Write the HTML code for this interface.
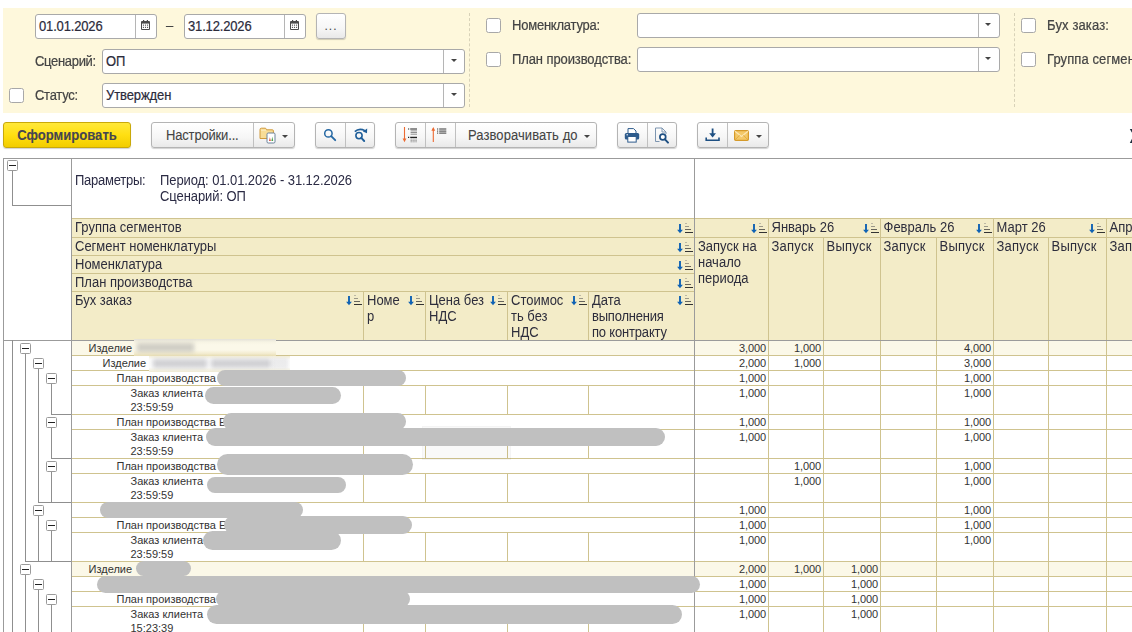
<!DOCTYPE html>
<html lang="ru"><head><meta charset="utf-8"><title>Отчет</title>
<style>
html,body{margin:0;padding:0;background:#fff;}
body{width:1132px;height:632px;overflow:hidden;position:relative;font-family:"Liberation Sans",Arial,sans-serif;font-size:13px;letter-spacing:-0.2px;color:#333;}
.abs{position:absolute;}
.panel{position:absolute;left:3px;top:8px;width:1129px;height:105px;background:#fef8dc;}
.inp{position:absolute;box-sizing:border-box;background:#fff;border:1px solid #a9a9a9;border-radius:3px;height:25px;line-height:25px;padding-left:3px;color:#2b2b3b;white-space:nowrap;overflow:hidden;}
.inp .sep{position:absolute;top:0;bottom:0;width:1px;background:#b5b5b5;}
.lbl{position:absolute;white-space:nowrap;color:#444;line-height:16px;transform:scaleY(1.1);transform-origin:0 12.5px;-webkit-text-stroke:0.2px;}
.tx{display:inline-block;transform:translateY(-0.7px) scaleY(1.1);transform-origin:0 70%;-webkit-text-stroke:0.2px;}
.btn .tx{transform:translateY(0.6px) scaleY(1.1);-webkit-text-stroke:0.08px;}
.cb{position:absolute;box-sizing:border-box;width:15px;height:15px;border:1px solid #a8a8a8;border-radius:2.5px;background:#fff;}
.arr{position:absolute;width:0;height:0;border-left:3px solid transparent;border-right:3px solid transparent;border-top:3px solid #444;}
.btn{position:absolute;box-sizing:border-box;top:122px;height:26px;border:1px solid #b4b4b4;border-radius:3px;background:linear-gradient(#ffffff,#f6f6f6 60%,#e9e9e9);box-shadow:0 1px 1px rgba(0,0,0,.18);white-space:nowrap;line-height:24px;color:#444;}
.btn .sep{position:absolute;top:0;bottom:0;width:1px;background:#c0c0c0;}
.btn svg{position:absolute;}
.dash{position:absolute;width:0;border-left:1px dashed #d8d2b8;}
.hl{position:absolute;height:1px;}
.vl{position:absolute;width:1px;}
.g{background:#9b9b9b;}
.t{background:#cfc38f;}
.hd{position:absolute;letter-spacing:0;font-size:13px;line-height:14.4px;transform:scaleY(1.1);transform-origin:0 0;color:#2d2d3c;white-space:nowrap;}
.d{position:absolute;letter-spacing:0;font-size:11px;line-height:14px;color:#333;white-space:nowrap;}
.n{position:absolute;letter-spacing:-0.1px;font-size:11px;line-height:14px;color:#333;text-align:right;width:50px;}
.box{position:absolute;box-sizing:border-box;width:11px;height:11px;border:1px solid #9a9a9a;border-radius:1.5px;background:#fff;}
.box:after{content:"";position:absolute;left:1px;top:4px;width:7px;height:1px;background:#222;}
.blob{position:absolute;background:#c0c0c0;}
.si{position:absolute;width:16px;height:11px;}
</style></head><body>

<div class="panel"></div>
<div class="inp" style="left:35px;top:14px;width:122px;"><span class="tx" style="letter-spacing:-0.16px">01.01.2026</span><span class="sep" style="left:99px"></span></div>
<div class="lbl" style="left:166px;top:18px;">–</div>
<div class="inp" style="left:184px;top:14px;width:122px;"><span class="tx" style="letter-spacing:-0.16px">31.12.2026</span><span class="sep" style="left:99px"></span></div>
<svg class="abs" style="left:141px;top:20px" width="9" height="10" viewBox="0 0 9 10"><rect x="0" y="1" width="9" height="9" rx="1" fill="#4a4a4a"/><rect x="1" y="3.6" width="7" height="5.4" fill="#fff"/><rect x="2" y="0" width="1.2" height="1.6" fill="#4a4a4a"/><rect x="5.8" y="0" width="1.2" height="1.6" fill="#4a4a4a"/><g fill="#4a4a4a"><rect x="1.9" y="4.6" width="1.1" height="1.1"/><rect x="3.95" y="4.6" width="1.1" height="1.1"/><rect x="6" y="4.6" width="1.1" height="1.1"/><rect x="1.9" y="6.8" width="1.1" height="1.1"/><rect x="3.95" y="6.8" width="1.1" height="1.1"/><rect x="6" y="6.8" width="1.1" height="1.1"/></g></svg>
<svg class="abs" style="left:290px;top:20px" width="9" height="10" viewBox="0 0 9 10"><rect x="0" y="1" width="9" height="9" rx="1" fill="#4a4a4a"/><rect x="1" y="3.6" width="7" height="5.4" fill="#fff"/><rect x="2" y="0" width="1.2" height="1.6" fill="#4a4a4a"/><rect x="5.8" y="0" width="1.2" height="1.6" fill="#4a4a4a"/><g fill="#4a4a4a"><rect x="1.9" y="4.6" width="1.1" height="1.1"/><rect x="3.95" y="4.6" width="1.1" height="1.1"/><rect x="6" y="4.6" width="1.1" height="1.1"/><rect x="1.9" y="6.8" width="1.1" height="1.1"/><rect x="3.95" y="6.8" width="1.1" height="1.1"/><rect x="6" y="6.8" width="1.1" height="1.1"/></g></svg>
<div class="btn" style="left:316px;top:13px;width:30px;height:26px;text-align:center;line-height:25px;color:#444;font-size:12px;letter-spacing:1px;">...</div>
<div class="lbl" style="left:35px;top:54px;letter-spacing:-0.32px">Сценарий:</div>
<div class="inp" style="left:102px;top:49px;width:363px;"><span class="tx" style="letter-spacing:0">ОП</span><span class="sep" style="left:340px"></span></div>
<div class="arr" style="left:450.5px;top:59px"></div>
<div class="cb" style="left:9px;top:88px"></div>
<div class="lbl" style="left:35px;top:88px;letter-spacing:-0.27px">Статус:</div>
<div class="inp" style="left:102px;top:83px;width:363px;"><span class="tx" style="letter-spacing:-0.1px">Утвержден</span><span class="sep" style="left:340px"></span></div>
<div class="arr" style="left:450.5px;top:93px"></div>
<div class="dash" style="left:469px;top:13px;height:94px"></div>
<div class="cb" style="left:486px;top:18px"></div>
<div class="lbl" style="left:512px;top:18px;letter-spacing:-0.22px">Номенклатура:</div>
<div class="inp" style="left:637px;top:13px;width:363px;"><span class="sep" style="left:340px"></span></div>
<div class="arr" style="left:984.5px;top:23px"></div>
<div class="cb" style="left:486px;top:52px"></div>
<div class="lbl" style="left:512px;top:52px;letter-spacing:-0.1px">План производства:</div>
<div class="inp" style="left:637px;top:47px;width:363px;"><span class="sep" style="left:340px"></span></div>
<div class="arr" style="left:984.5px;top:57px"></div>
<div class="dash" style="left:1014px;top:13px;height:94px"></div>
<div class="cb" style="left:1021px;top:18px"></div>
<div class="lbl" style="left:1047px;top:18px;letter-spacing:0.13px">Бух заказ:</div>
<div class="cb" style="left:1021px;top:52px"></div>
<div class="lbl" style="left:1047px;top:52px;letter-spacing:0.1px">Группа сегментов номенклатуры:</div>
<div class="btn" style="left:3px;width:128px;border-color:#c9a90a;background:linear-gradient(#ffe83a,#ffdf12 50%,#f2cd00);text-align:center;font-weight:bold;font-size:13.1px;letter-spacing:0;color:#454550;"><span class="tx">Сформировать</span></div>
<div class="btn" style="left:151px;width:144px;padding-left:14px;"><span class="tx" style="letter-spacing:-0.17px">Настройки...</span><span class="sep" style="left:101px"></span><svg style="left:106.5px;top:3.5px" width="18" height="17" viewBox="0 0 18 17"><path d="M1 2.6 Q1 1.2 2.4 1.2 H6.6 L7.6 2.8 H13.4 Q14.4 2.8 14.4 3.8 V11.5 H1 Z" fill="#f8dc96" stroke="#d09a3c" stroke-width="1"/><path d="M2 3.2 H7" stroke="#fbeec8" stroke-width="1"/><rect x="8" y="6" width="8" height="10" rx="1.2" fill="#fff" stroke="#6a829c" stroke-width="1"/><path d="M10 14 L10.9 10.2 L11.8 14 Z" fill="#e0483c"/><path d="M12.4 14 L13.3 9.6 L14.2 14 Z" fill="#4aa24a"/></svg></div>
<div class="arr" style="left:282px;top:134.5px"></div>
<div class="btn" style="left:315px;width:60px;"><span class="sep" style="left:29px"></span><svg style="left:7px;top:5px" width="14" height="14" viewBox="0 0 14 14"><circle cx="5.4" cy="5.4" r="3.7" fill="none" stroke="#2467a3" stroke-width="1.5"/><path d="M8.2 8.2 L12.2 12.2" stroke="#2467a3" stroke-width="1.9" stroke-linecap="round"/></svg><svg style="left:36.5px;top:4px" width="16" height="16" viewBox="0 0 16 16"><circle cx="6" cy="8.6" r="3.1" fill="none" stroke="#1f5f9a" stroke-width="1.6"/><path d="M8.3 10.9 L11.2 14" stroke="#1f5f9a" stroke-width="1.9" stroke-linecap="round"/><path d="M1.8 4.6 Q6 0.6 12 3.6" fill="none" stroke="#1f5f9a" stroke-width="1.6"/><path d="M14.2 1.6 L14 6.2 L9.8 4.4 Z" fill="#1f5f9a"/></svg></div>
<div class="btn" style="left:395px;width:202px;padding-left:72px;"><span class="sep" style="left:29px"></span><span class="sep" style="left:59px"></span><span class="tx" style="letter-spacing:0.08px">Разворачивать до</span><svg style="left:6px;top:4px" width="18" height="17" viewBox="0 0 18 17"><path d="M2.5 0 V13.5" stroke="#ec6a32" stroke-width="1.1"/><path d="M0.6 11.6 L2.5 15.2 L4.4 11.6 Z" fill="#ec6a32"/><g stroke="#222" stroke-width="1.2"><path d="M6 2 H7.2 M8.2 2 H15"/><path d="M6 10.3 H7.2 M8.2 10.3 H15"/></g><g stroke="#777" stroke-width="0.8"><path d="M8.6 3.9 H15"/><path d="M8.6 5.5 H15"/><path d="M8.6 7.2 H15"/><path d="M8.6 11.9 H15" stroke-dasharray="1.2 0.7"/><path d="M8.6 13.4 H15" stroke-dasharray="1.2 0.7"/><path d="M8.6 14.8 H15" stroke-dasharray="1.2 0.7"/></g></svg><svg style="left:34px;top:4px" width="18" height="17" viewBox="0 0 18 17"><path d="M3.3 1.5 V15" stroke="#ec6a32" stroke-width="1.1"/><path d="M1.4 3.8 L3.3 0 L5.2 3.8 Z" fill="#ec6a32"/><g stroke="#222" stroke-width="0.9"><path d="M7 2 H8.2 M9.2 2 H16.3"/><path d="M7 4.1 H8.2 M9.2 4.1 H16.3"/><path d="M7 6.1 H8.2 M9.2 6.1 H16.3"/></g></svg></div>
<div class="arr" style="left:584px;top:134.5px"></div>
<div class="btn" style="left:617px;width:60px;"><span class="sep" style="left:29px"></span><svg style="left:6.2px;top:5px" width="16" height="15" viewBox="0 0 16 15"><path d="M4 5 V0.6 H9.5 L12 3 V5" fill="#fff" stroke="#2d5b8c" stroke-width="1"/><rect x="0.8" y="5" width="14.4" height="6.5" rx="1.5" fill="#2d5b8c"/><rect x="3.8" y="8.5" width="8.4" height="5.6" fill="#fff" stroke="#2d5b8c" stroke-width="1"/><rect x="2.5" y="6.3" width="1.5" height="1" fill="#fff"/></svg><svg style="left:36px;top:4px" width="16" height="17" viewBox="0 0 16 17"><path d="M1.5 1 H8 L12 5 V7 M1.5 1 V14.5 H5.5" fill="none" stroke="#7d95b0" stroke-width="1"/><path d="M8 1 V5 H12" fill="none" stroke="#7d95b0" stroke-width="1"/><circle cx="8.8" cy="10" r="2.9" fill="#fff" stroke="#1d4f82" stroke-width="1.7"/><path d="M11 12.4 L14 15.6" stroke="#1d4f82" stroke-width="2" stroke-linecap="round"/></svg></div>
<div class="btn" style="left:697px;width:72px;"><span class="sep" style="left:29px"></span><svg style="left:7px;top:5px" width="16" height="14" viewBox="0 0 16 14"><path d="M7.6 0.5 V8" stroke="#1d4f82" stroke-width="1.8"/><path d="M4.2 5.2 L7.6 9.4 L11 5.2 Z" fill="#1d4f82"/><path d="M1.2 9.5 V12.3 H14 V9.5" fill="none" stroke="#1d4f82" stroke-width="1.6"/></svg><svg style="left:36px;top:7px" width="15" height="11" viewBox="0 0 15 11"><rect x="0.6" y="0.6" width="13.8" height="9.8" rx="1.2" fill="#f4c868" stroke="#d59a2a" stroke-width="1.2"/><path d="M1 1.2 L7.5 6.4 L14 1.2" fill="none" stroke="#fbe7b5" stroke-width="1.2"/><path d="M1 10 L5.6 5.2 M14 10 L9.4 5.2" stroke="#dca63a" stroke-width="0.8"/></svg></div>
<div class="arr" style="left:756px;top:134.5px"></div>
<svg class="abs" style="left:1129px;top:129px" width="3" height="14" viewBox="0 0 3 14"><path d="M0.8 0 H3 V3.8 Z M0.8 14 H3 V9.8 Z" fill="#1f2d3d"/></svg>
<div class="abs" style="left:72px;top:218px;width:1060px;height:122px;background:#f3ecc8"></div>
<div class="abs" style="left:72px;top:340px;width:1060px;height:15px;background:#fbf8e8"></div>
<div class="abs" style="left:72px;top:561px;width:1060px;height:15px;background:#fbf8e8"></div>
<div class="hl t" style="left:72px;top:218px;width:622px"></div>
<div class="hl t" style="left:72px;top:237px;width:622px"></div>
<div class="hl t" style="left:72px;top:255px;width:622px"></div>
<div class="hl t" style="left:72px;top:273px;width:622px"></div>
<div class="hl t" style="left:72px;top:291px;width:622px"></div>
<div class="hl t" style="left:694px;top:218px;width:438px"></div>
<div class="hl t" style="left:694px;top:237px;width:438px"></div>
<div class="vl t" style="left:363px;top:291px;height:49px"></div>
<div class="vl t" style="left:425px;top:291px;height:49px"></div>
<div class="vl t" style="left:507px;top:291px;height:49px"></div>
<div class="vl t" style="left:588px;top:291px;height:49px"></div>
<div class="vl t" style="left:768px;top:218px;height:122px"></div>
<div class="vl t" style="left:823px;top:237px;height:103px"></div>
<div class="vl t" style="left:880px;top:218px;height:122px"></div>
<div class="vl t" style="left:936px;top:237px;height:103px"></div>
<div class="vl t" style="left:993px;top:218px;height:122px"></div>
<div class="vl t" style="left:1048px;top:237px;height:103px"></div>
<div class="vl t" style="left:1106px;top:218px;height:122px"></div>
<div class="hl t" style="left:72px;top:355px;width:1060px"></div>
<div class="hl t" style="left:72px;top:370px;width:1060px"></div>
<div class="hl t" style="left:72px;top:385px;width:1060px"></div>
<div class="hl t" style="left:72px;top:414px;width:1060px"></div>
<div class="vl t" style="left:363px;top:385px;height:29px"></div>
<div class="vl t" style="left:425px;top:385px;height:29px"></div>
<div class="vl t" style="left:507px;top:385px;height:29px"></div>
<div class="vl t" style="left:588px;top:385px;height:29px"></div>
<div class="hl t" style="left:72px;top:429px;width:1060px"></div>
<div class="hl t" style="left:72px;top:458px;width:1060px"></div>
<div class="vl t" style="left:363px;top:429px;height:29px"></div>
<div class="vl t" style="left:425px;top:429px;height:29px"></div>
<div class="vl t" style="left:507px;top:429px;height:29px"></div>
<div class="vl t" style="left:588px;top:429px;height:29px"></div>
<div class="hl t" style="left:72px;top:473px;width:1060px"></div>
<div class="hl t" style="left:72px;top:502px;width:1060px"></div>
<div class="vl t" style="left:363px;top:473px;height:29px"></div>
<div class="vl t" style="left:425px;top:473px;height:29px"></div>
<div class="vl t" style="left:507px;top:473px;height:29px"></div>
<div class="vl t" style="left:588px;top:473px;height:29px"></div>
<div class="hl t" style="left:72px;top:517px;width:1060px"></div>
<div class="hl t" style="left:72px;top:532px;width:1060px"></div>
<div class="hl t" style="left:72px;top:561px;width:1060px"></div>
<div class="vl t" style="left:363px;top:532px;height:29px"></div>
<div class="vl t" style="left:425px;top:532px;height:29px"></div>
<div class="vl t" style="left:507px;top:532px;height:29px"></div>
<div class="vl t" style="left:588px;top:532px;height:29px"></div>
<div class="hl t" style="left:72px;top:576px;width:1060px"></div>
<div class="hl t" style="left:72px;top:591px;width:1060px"></div>
<div class="hl t" style="left:72px;top:606px;width:1060px"></div>
<div class="hl t" style="left:72px;top:635px;width:1060px"></div>
<div class="vl t" style="left:363px;top:606px;height:29px"></div>
<div class="vl t" style="left:425px;top:606px;height:29px"></div>
<div class="vl t" style="left:507px;top:606px;height:29px"></div>
<div class="vl t" style="left:588px;top:606px;height:29px"></div>
<div class="vl t" style="left:768px;top:340px;height:292px"></div>
<div class="vl t" style="left:823px;top:340px;height:292px"></div>
<div class="vl t" style="left:880px;top:340px;height:292px"></div>
<div class="vl t" style="left:936px;top:340px;height:292px"></div>
<div class="vl t" style="left:993px;top:340px;height:292px"></div>
<div class="vl t" style="left:1048px;top:340px;height:292px"></div>
<div class="vl t" style="left:1106px;top:340px;height:292px"></div>
<div class="hl g" style="left:3px;top:158px;width:1129px"></div>
<div class="vl g" style="left:3px;top:158px;height:474px"></div>
<div class="vl g" style="left:71px;top:158px;height:474px"></div>
<div class="vl g" style="left:694px;top:158px;height:474px"></div>
<div class="hl g" style="left:3px;top:340px;width:1129px"></div>
<div class="hd" style="left:75px;top:173px;color:#2b2b44;letter-spacing:-0.25px">Параметры:</div>
<div class="hd" style="left:160px;top:173px;color:#2b2b44;letter-spacing:-0.08px">Период: 01.01.2026 - 31.12.2026<br>Сценарий: ОП</div>
<div class="hd" style="left:75px;top:220px;">Группа сегментов</div>
<svg class="si" style="left:677px;top:223px" viewBox="0 0 16 11"><path d="M3 1 V7.4" stroke="#0f62b4" stroke-width="1.9"/><path d="M0.1 6.8 L3 10.2 L5.9 6.8 Z" fill="#0f62b4"/><path d="M8 0.5 H10" stroke="#bdb9a6" stroke-width="1"/><path d="M8 3.5 H12" stroke="#9a9788" stroke-width="1"/><path d="M8 6.5 H14" stroke="#66645c" stroke-width="1"/><path d="M8 9.5 H16" stroke="#333" stroke-width="1"/></svg>
<div class="hd" style="left:75px;top:239px;">Сегмент номенклатуры</div>
<svg class="si" style="left:677px;top:242px" viewBox="0 0 16 11"><path d="M3 1 V7.4" stroke="#0f62b4" stroke-width="1.9"/><path d="M0.1 6.8 L3 10.2 L5.9 6.8 Z" fill="#0f62b4"/><path d="M8 0.5 H10" stroke="#bdb9a6" stroke-width="1"/><path d="M8 3.5 H12" stroke="#9a9788" stroke-width="1"/><path d="M8 6.5 H14" stroke="#66645c" stroke-width="1"/><path d="M8 9.5 H16" stroke="#333" stroke-width="1"/></svg>
<div class="hd" style="left:75px;top:257px;">Номенклатура</div>
<svg class="si" style="left:677px;top:260px" viewBox="0 0 16 11"><path d="M3 1 V7.4" stroke="#0f62b4" stroke-width="1.9"/><path d="M0.1 6.8 L3 10.2 L5.9 6.8 Z" fill="#0f62b4"/><path d="M8 0.5 H10" stroke="#bdb9a6" stroke-width="1"/><path d="M8 3.5 H12" stroke="#9a9788" stroke-width="1"/><path d="M8 6.5 H14" stroke="#66645c" stroke-width="1"/><path d="M8 9.5 H16" stroke="#333" stroke-width="1"/></svg>
<div class="hd" style="left:75px;top:275px;">План производства</div>
<svg class="si" style="left:677px;top:278px" viewBox="0 0 16 11"><path d="M3 1 V7.4" stroke="#0f62b4" stroke-width="1.9"/><path d="M0.1 6.8 L3 10.2 L5.9 6.8 Z" fill="#0f62b4"/><path d="M8 0.5 H10" stroke="#bdb9a6" stroke-width="1"/><path d="M8 3.5 H12" stroke="#9a9788" stroke-width="1"/><path d="M8 6.5 H14" stroke="#66645c" stroke-width="1"/><path d="M8 9.5 H16" stroke="#333" stroke-width="1"/></svg>
<div class="hd" style="left:75px;top:293px;">Бух заказ</div>
<svg class="si" style="left:346px;top:295px" viewBox="0 0 16 11"><path d="M3 1 V7.4" stroke="#0f62b4" stroke-width="1.9"/><path d="M0.1 6.8 L3 10.2 L5.9 6.8 Z" fill="#0f62b4"/><path d="M8 0.5 H10" stroke="#bdb9a6" stroke-width="1"/><path d="M8 3.5 H12" stroke="#9a9788" stroke-width="1"/><path d="M8 6.5 H14" stroke="#66645c" stroke-width="1"/><path d="M8 9.5 H16" stroke="#333" stroke-width="1"/></svg>
<div class="hd" style="left:367px;top:293px;">Номе<br>р</div>
<svg class="si" style="left:408px;top:295px" viewBox="0 0 16 11"><path d="M3 1 V7.4" stroke="#0f62b4" stroke-width="1.9"/><path d="M0.1 6.8 L3 10.2 L5.9 6.8 Z" fill="#0f62b4"/><path d="M8 0.5 H10" stroke="#bdb9a6" stroke-width="1"/><path d="M8 3.5 H12" stroke="#9a9788" stroke-width="1"/><path d="M8 6.5 H14" stroke="#66645c" stroke-width="1"/><path d="M8 9.5 H16" stroke="#333" stroke-width="1"/></svg>
<div class="hd" style="left:429px;top:293px;">Цена без<br>НДС</div>
<svg class="si" style="left:490px;top:295px" viewBox="0 0 16 11"><path d="M3 1 V7.4" stroke="#0f62b4" stroke-width="1.9"/><path d="M0.1 6.8 L3 10.2 L5.9 6.8 Z" fill="#0f62b4"/><path d="M8 0.5 H10" stroke="#bdb9a6" stroke-width="1"/><path d="M8 3.5 H12" stroke="#9a9788" stroke-width="1"/><path d="M8 6.5 H14" stroke="#66645c" stroke-width="1"/><path d="M8 9.5 H16" stroke="#333" stroke-width="1"/></svg>
<div class="hd" style="left:511px;top:293px;">Стоимос<br>ть без<br>НДС</div>
<svg class="si" style="left:571px;top:295px" viewBox="0 0 16 11"><path d="M3 1 V7.4" stroke="#0f62b4" stroke-width="1.9"/><path d="M0.1 6.8 L3 10.2 L5.9 6.8 Z" fill="#0f62b4"/><path d="M8 0.5 H10" stroke="#bdb9a6" stroke-width="1"/><path d="M8 3.5 H12" stroke="#9a9788" stroke-width="1"/><path d="M8 6.5 H14" stroke="#66645c" stroke-width="1"/><path d="M8 9.5 H16" stroke="#333" stroke-width="1"/></svg>
<div class="hd" style="left:592px;top:293px;">Дата<br><span style="letter-spacing:-0.2px">выполнения</span><br><span style="letter-spacing:-0.18px">по контракту</span></div>
<svg class="si" style="left:677px;top:295px" viewBox="0 0 16 11"><path d="M3 1 V7.4" stroke="#0f62b4" stroke-width="1.9"/><path d="M0.1 6.8 L3 10.2 L5.9 6.8 Z" fill="#0f62b4"/><path d="M8 0.5 H10" stroke="#bdb9a6" stroke-width="1"/><path d="M8 3.5 H12" stroke="#9a9788" stroke-width="1"/><path d="M8 6.5 H14" stroke="#66645c" stroke-width="1"/><path d="M8 9.5 H16" stroke="#333" stroke-width="1"/></svg>
<svg class="si" style="left:751px;top:223px" viewBox="0 0 16 11"><path d="M3 1 V7.4" stroke="#0f62b4" stroke-width="1.9"/><path d="M0.1 6.8 L3 10.2 L5.9 6.8 Z" fill="#0f62b4"/><path d="M8 0.5 H10" stroke="#bdb9a6" stroke-width="1"/><path d="M8 3.5 H12" stroke="#9a9788" stroke-width="1"/><path d="M8 6.5 H14" stroke="#66645c" stroke-width="1"/><path d="M8 9.5 H16" stroke="#333" stroke-width="1"/></svg>
<div class="hd" style="left:771.5px;top:220px;">Январь 26</div>
<svg class="si" style="left:863px;top:223px" viewBox="0 0 16 11"><path d="M3 1 V7.4" stroke="#0f62b4" stroke-width="1.9"/><path d="M0.1 6.8 L3 10.2 L5.9 6.8 Z" fill="#0f62b4"/><path d="M8 0.5 H10" stroke="#bdb9a6" stroke-width="1"/><path d="M8 3.5 H12" stroke="#9a9788" stroke-width="1"/><path d="M8 6.5 H14" stroke="#66645c" stroke-width="1"/><path d="M8 9.5 H16" stroke="#333" stroke-width="1"/></svg>
<div class="hd" style="left:883.5px;top:220px;">Февраль 26</div>
<svg class="si" style="left:976px;top:223px" viewBox="0 0 16 11"><path d="M3 1 V7.4" stroke="#0f62b4" stroke-width="1.9"/><path d="M0.1 6.8 L3 10.2 L5.9 6.8 Z" fill="#0f62b4"/><path d="M8 0.5 H10" stroke="#bdb9a6" stroke-width="1"/><path d="M8 3.5 H12" stroke="#9a9788" stroke-width="1"/><path d="M8 6.5 H14" stroke="#66645c" stroke-width="1"/><path d="M8 9.5 H16" stroke="#333" stroke-width="1"/></svg>
<div class="hd" style="left:996.5px;top:220px;">Март 26</div>
<svg class="si" style="left:1089px;top:223px" viewBox="0 0 16 11"><path d="M3 1 V7.4" stroke="#0f62b4" stroke-width="1.9"/><path d="M0.1 6.8 L3 10.2 L5.9 6.8 Z" fill="#0f62b4"/><path d="M8 0.5 H10" stroke="#bdb9a6" stroke-width="1"/><path d="M8 3.5 H12" stroke="#9a9788" stroke-width="1"/><path d="M8 6.5 H14" stroke="#66645c" stroke-width="1"/><path d="M8 9.5 H16" stroke="#333" stroke-width="1"/></svg>
<div class="hd" style="left:1109.5px;top:220px;">Апрель 26</div>
<div class="hd" style="left:698px;top:239px;">Запуск на<br>начало<br>периода</div>
<div class="hd" style="left:771.5px;top:239px;letter-spacing:0.25px">Запуск</div>
<div class="hd" style="left:826.5px;top:239px;letter-spacing:0.25px">Выпуск</div>
<div class="hd" style="left:883.5px;top:239px;letter-spacing:0.25px">Запуск</div>
<div class="hd" style="left:939.5px;top:239px;letter-spacing:0.25px">Выпуск</div>
<div class="hd" style="left:996.5px;top:239px;letter-spacing:0.25px">Запуск</div>
<div class="hd" style="left:1051.5px;top:239px;letter-spacing:0.25px">Выпуск</div>
<div class="hd" style="left:1109.5px;top:239px;letter-spacing:0.25px">Запуск</div>
<div class="vl g" style="left:12px;top:165px;height:40px;background:#8f8f8f"></div>
<div class="hl g" style="left:12px;top:205px;width:59px;background:#8f8f8f"></div>
<div class="box" style="left:7px;top:160px"></div>
<div class="vl g" style="left:12px;top:340px;height:292px;background:#8f8f8f"></div>
<div class="vl g" style="left:25px;top:348px;height:213px;background:#8f8f8f"></div>
<div class="hl g" style="left:25px;top:561px;width:46px;background:#8f8f8f"></div>
<div class="vl g" style="left:38px;top:363px;height:139px;background:#8f8f8f"></div>
<div class="hl g" style="left:38px;top:502px;width:33px;background:#8f8f8f"></div>
<div class="vl g" style="left:51px;top:378px;height:36px;background:#8f8f8f"></div>
<div class="hl g" style="left:51px;top:414px;width:20px;background:#8f8f8f"></div>
<div class="vl g" style="left:51px;top:422px;height:36px;background:#8f8f8f"></div>
<div class="hl g" style="left:51px;top:458px;width:20px;background:#8f8f8f"></div>
<div class="vl g" style="left:51px;top:466px;height:36px;background:#8f8f8f"></div>
<div class="vl g" style="left:38px;top:510px;height:51px;background:#8f8f8f"></div>
<div class="vl g" style="left:51px;top:525px;height:36px;background:#8f8f8f"></div>
<div class="vl g" style="left:25px;top:569px;height:63px;background:#8f8f8f"></div>
<div class="vl g" style="left:38px;top:584px;height:48px;background:#8f8f8f"></div>
<div class="vl g" style="left:51px;top:599px;height:33px;background:#8f8f8f"></div>
<div class="box" style="left:20px;top:343px"></div>
<div class="box" style="left:33px;top:358px"></div>
<div class="box" style="left:46px;top:373px"></div>
<div class="box" style="left:46px;top:417px"></div>
<div class="box" style="left:46px;top:461px"></div>
<div class="box" style="left:33px;top:505px"></div>
<div class="box" style="left:46px;top:520px"></div>
<div class="box" style="left:20px;top:564px"></div>
<div class="box" style="left:33px;top:579px"></div>
<div class="box" style="left:46px;top:594px"></div>
<div class="d" style="left:88.5px;top:341px;">Изделие</div>
<div class="d" style="left:102.5px;top:356px;">Изделие</div>
<div class="d" style="left:116.5px;top:371px;">План производства</div>
<div class="d" style="left:130.5px;top:386px;">Заказ клиента<br>23:59:59</div>
<div class="d" style="left:116.5px;top:415px;">План производства Е</div>
<div class="d" style="left:130.5px;top:430px;">Заказ клиента<br>23:59:59</div>
<div class="d" style="left:116.5px;top:459px;">План производства</div>
<div class="d" style="left:130.5px;top:474px;">Заказ клиента<br>23:59:59</div>
<div class="d" style="left:116.5px;top:518px;">План производства Е</div>
<div class="d" style="left:130.5px;top:533px;">Заказ клиента<br>23:59:59</div>
<div class="d" style="left:88.5px;top:562px;">Изделие</div>
<div class="d" style="left:116.5px;top:592px;">План производства</div>
<div class="d" style="left:130.5px;top:607px;">Заказ клиента<br>15:23:39</div>
<div class="n" style="left:716px;top:341px;">3,000</div>
<div class="n" style="left:771px;top:341px;">1,000</div>
<div class="n" style="left:941px;top:341px;">4,000</div>
<div class="n" style="left:716px;top:356px;">2,000</div>
<div class="n" style="left:771px;top:356px;">1,000</div>
<div class="n" style="left:941px;top:356px;">3,000</div>
<div class="n" style="left:716px;top:371px;">1,000</div>
<div class="n" style="left:941px;top:371px;">1,000</div>
<div class="n" style="left:716px;top:386px;">1,000</div>
<div class="n" style="left:941px;top:386px;">1,000</div>
<div class="n" style="left:716px;top:415px;">1,000</div>
<div class="n" style="left:941px;top:415px;">1,000</div>
<div class="n" style="left:716px;top:430px;">1,000</div>
<div class="n" style="left:941px;top:430px;">1,000</div>
<div class="n" style="left:771px;top:459px;">1,000</div>
<div class="n" style="left:941px;top:459px;">1,000</div>
<div class="n" style="left:771px;top:474px;">1,000</div>
<div class="n" style="left:941px;top:474px;">1,000</div>
<div class="n" style="left:716px;top:503px;">1,000</div>
<div class="n" style="left:941px;top:503px;">1,000</div>
<div class="n" style="left:716px;top:518px;">1,000</div>
<div class="n" style="left:941px;top:518px;">1,000</div>
<div class="n" style="left:716px;top:533px;">1,000</div>
<div class="n" style="left:941px;top:533px;">1,000</div>
<div class="n" style="left:716px;top:562px;">2,000</div>
<div class="n" style="left:771px;top:562px;">1,000</div>
<div class="n" style="left:828px;top:562px;">1,000</div>
<div class="n" style="left:716px;top:577px;">1,000</div>
<div class="n" style="left:828px;top:577px;">1,000</div>
<div class="n" style="left:716px;top:592px;">1,000</div>
<div class="n" style="left:828px;top:592px;">1,000</div>
<div class="n" style="left:716px;top:607px;">1,000</div>
<div class="n" style="left:828px;top:607px;">1,000</div>
<div class="abs" style="left:134px;top:339px;width:142px;height:17px;background:linear-gradient(#e4e2d8,#f7f4e4 18%,#fbf8e9 35%,#fbf8e9 65%,#f3ecd0 85%,#e9dfb4)"></div>
<div class="abs" style="left:137px;top:343px;width:57px;height:9px;background:rgba(120,120,125,.33);filter:blur(2px)"></div>
<div class="abs" style="left:149px;top:356px;width:141px;height:16px;background:linear-gradient(#f4efd9,#fbfbfb 20%,#fdfdfd 70%,#f1ecd6)"></div>
<div class="abs" style="left:153px;top:359px;width:54px;height:9px;background:rgba(120,120,130,.33);filter:blur(2px)"></div>
<div class="abs" style="left:211px;top:359px;width:60px;height:9px;background:rgba(120,120,130,.33);filter:blur(2px)"></div>
<div class="abs" style="left:272px;top:358px;width:16px;height:11px;background:rgba(120,120,130,.12);filter:blur(1.5px)"></div>
<div class="abs" style="left:422px;top:426px;width:89px;height:34px;background:rgba(0,0,0,.025);border:1px solid rgba(0,0,0,.02);box-sizing:border-box"></div>
<div class="blob" style="left:217px;top:369.5px;width:188.5px;height:16.5px;border-radius:8.25px"></div>
<div class="blob" style="left:205px;top:386.5px;width:136px;height:17px;border-radius:8.5px"></div>
<div class="blob" style="left:223px;top:413px;width:182.5px;height:16.5px;border-radius:8.25px"></div>
<div class="blob" style="left:205.5px;top:428px;width:459px;height:18px;border-radius:9px"></div>
<div class="blob" style="left:217px;top:453.5px;width:195.5px;height:21.5px;border-radius:10.75px"></div>
<div class="blob" style="left:206.5px;top:476.5px;width:139.5px;height:16px;border-radius:8px"></div>
<div class="blob" style="left:100px;top:501.5px;width:203px;height:16px;border-radius:8px"></div>
<div class="blob" style="left:223.5px;top:516px;width:188.5px;height:18px;border-radius:9px"></div>
<div class="blob" style="left:203px;top:531px;width:138px;height:19px;border-radius:9.5px"></div>
<div class="blob" style="left:136px;top:560.5px;width:55px;height:15.5px;border-radius:7.75px"></div>
<div class="blob" style="left:97px;top:575.5px;width:603px;height:17.5px;border-radius:8.75px"></div>
<div class="blob" style="left:216px;top:591px;width:194px;height:16px;border-radius:8px"></div>
<div class="blob" style="left:206.5px;top:605px;width:475.5px;height:19px;border-radius:9.5px"></div>
</body></html>
